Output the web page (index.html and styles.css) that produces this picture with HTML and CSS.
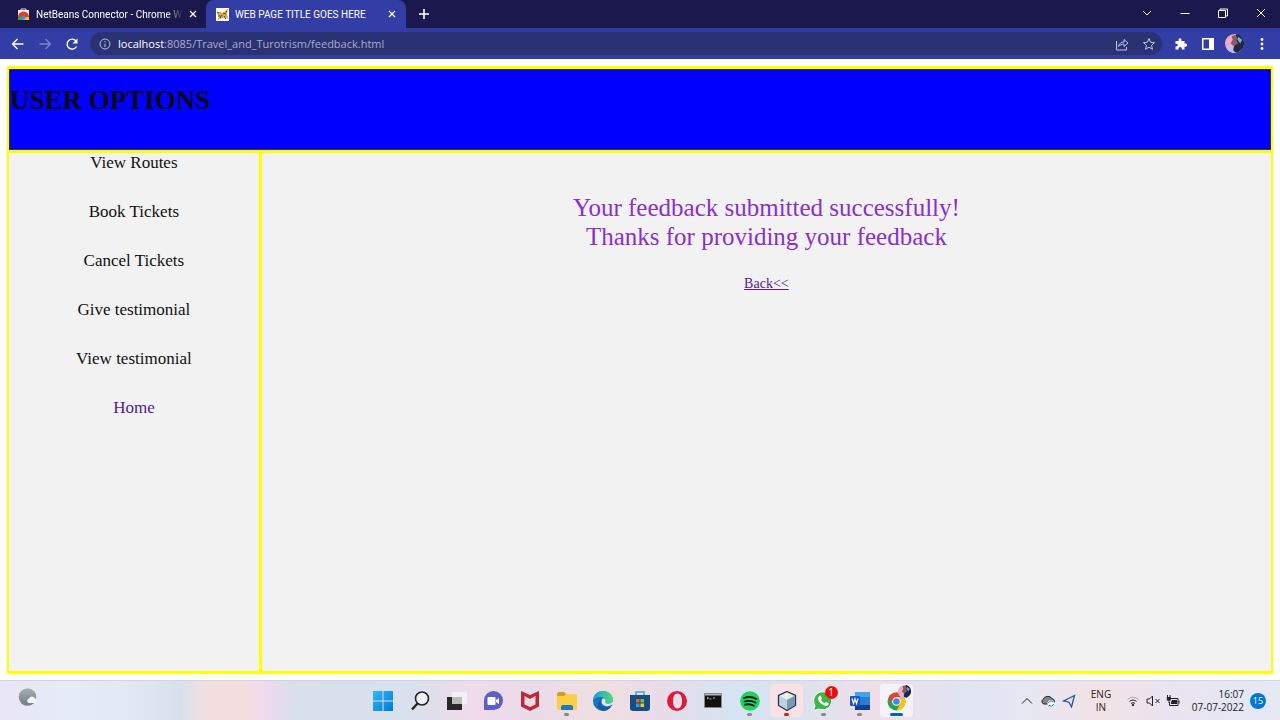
FILE: index.html
```html
<!DOCTYPE html>
<html lang="en">
<head>
<meta charset="utf-8">
<title>WEB PAGE TITLE GOES HERE</title>
<link rel="stylesheet" href="styles.css">
</head>
<body>
<header class="browser">
  <div class="tabs">
    <div class="tab">
      <svg class="favicon" viewBox="0 0 13 13"><path d="M4 3V1h5v2" fill="none" stroke="#ddd"/><path d="M1 2h11v10H1z" fill="#eee"/><path d="M1 9a5.500 5.500 0 0 1 11 0z" fill="#e33b2e"/><path d="M1 9h4l2 3H1z" fill="#36a852"/><path d="M8 9h4v3H6z" fill="#fbc116"/><circle cx="6.500" cy="9.500" r="2" fill="#4285f4"/></svg>
      <span class="tab-title tab-fade">NetBeans Connector - Chrome W</span>
      <button class="close" aria-label="Close tab"><svg viewBox="0 0 8 8"><path d="M1 1l6 6M7 1L1 7"/></svg></button>
    </div>
    <div class="tab active">
      <svg class="favicon" viewBox="0 0 13 13"><path fill="#fff" d="M0 0h13v13H0z"/><path d="M1 5l3-1 3 1 3-3 2-1-1 5 1 5-3-2-2 1-3 1-3 1 2-3z" fill="#d6a848"/><path d="M1 4l2 1M4 10l2-3M7 5l3 1M10 3l1 1M2 8h2M8 8l2 3" stroke="#57451f"/></svg>
      <span class="tab-title">WEB PAGE TITLE GOES HERE</span>
      <button class="close" aria-label="Close tab"><svg viewBox="0 0 8 8"><path d="M1 1l6 6M7 1L1 7"/></svg></button>
    </div>
    <button class="new-tab" aria-label="New tab"><svg viewBox="0 0 12 12"><path d="M6 1v10M1 6h10"/></svg></button>
    <div class="window-controls">
      <button aria-label="Search tabs"><svg viewBox="0 0 12 12"><path d="M2 4l4 4 4-4"/></svg></button>
      <button aria-label="Minimize"><svg viewBox="0 0 12 12"><path d="M1.500 6.500h9"/></svg></button>
      <button aria-label="Restore"><svg viewBox="0 0 12 12"><path d="M1.500 3.500h7v7h-7zM3 3.500v-1.500h7.500V9H9"/></svg></button>
      <button aria-label="Close window"><svg viewBox="0 0 12 12"><path d="M2 2l8 8M10 2l-8 8"/></svg></button>
    </div>
  </div>
  <div class="toolbar">
    <button class="nav" aria-label="Back"><svg viewBox="0 0 14 14"><path d="M12.500 7h-11M6.500 2l-5 5 5 5"/></svg></button>
    <button class="nav dim" aria-label="Forward"><svg viewBox="0 0 14 14"><path d="M1.500 7h11M7.500 2l5 5-5 5"/></svg></button>
    <button class="nav" aria-label="Reload"><svg viewBox="0 0 14 14"><path d="M11.500 9.500A5 5 0 1 1 11 4"/><path d="M12.500 1.500v5h-5z" class="solid"/></svg></button>
    <div class="address">
      <svg class="info" viewBox="0 0 12 12"><circle cx="6" cy="6" r="5"/><path d="M6 5.500V9M6 3v1.200"/></svg>
      <a class="url" href="#"><span class="host">localhost</span>:8085/Travel_and_Turotrism/feedback.html</a>
      <button class="nav soft" aria-label="Share"><svg viewBox="0 0 14 14"><path d="M1.500 4v9h10v-3"/><path d="M3.500 9.500C4 6.500 6 5 9 5V2.500L13 6 9 9.500V7C7 7 5 8 3.500 9.500z"/></svg></button>
      <button class="nav soft" aria-label="Bookmark"><svg viewBox="0 0 14 14"><path d="M7 1.500l1.600 3.800 4 .3-3.100 2.700 1 4L7 10.200l-3.500 2.100 1-4L1.400 5.600l4-.3z"/></svg></button>
    </div>
    <button class="nav" aria-label="Extensions"><svg viewBox="0 0 14 14"><path class="solid" d="M1.500 4h3.200C4.200 2.500 4.800 1.200 6 1.200S7.800 2.500 7.300 4h3.200v2.700c1.500-.5 2.600.1 2.600 1.400s-1.100 1.900-2.600 1.400v3H7.800c.3-1.500-.3-2.400-1.600-2.400s-1.900.9-1.600 2.400H1.500V9.400C3 9.600 3.800 9 3.800 8S3 6.500 1.500 6.800z"/></svg></button>
    <button class="nav" aria-label="Side panel"><svg viewBox="0 0 14 14"><path class="solid" fill-rule="evenodd" d="M1 1h12v12H1zM2.500 2.500v9H8v-9z"/></svg></button>
    <button class="nav profile" aria-label="Profile"><svg viewBox="0 0 20 20"><use href="#avatar"/></svg></button>
    <button class="nav" aria-label="Menu"><svg viewBox="0 0 14 14"><g class="solid"><circle cx="7" cy="2.500" r="1.400"/><circle cx="7" cy="7" r="1.400"/><circle cx="7" cy="11.500" r="1.400"/></g></svg></button>
  </div>
</header>

<main class="page">
  <div class="frame">
    <div class="banner"><h1>USER OPTIONS</h1></div>
    <nav class="side">
      <a href="#">View Routes</a>
      <a href="#">Book Tickets</a>
      <a href="#">Cancel Tickets</a>
      <a href="#">Give testimonial</a>
      <a href="#">View testimonial</a>
      <a href="#" class="visited">Home</a>
    </nav>
    <section class="content">
      <p class="message">Your feedback submitted successfully!<br>Thanks for providing your feedback</p>
      <a class="back" href="#">Back&lt;&lt;</a>
    </section>
  </div>
</main>

<footer class="taskbar">
  <button class="weather" aria-label="Weather"><svg viewBox="0 0 20 20"><circle cx="9.500" cy="9" r="8.800" fill="url(#moon)"/><path d="M11 15a2.300 2.300 0 0 1 0-4.500 3.300 3.300 0 0 1 6 0 2.300 2.300 0 0 1 0 4.500z" fill="#f3f4f6"/></svg></button>
  <div class="apps">
    <button aria-label="Start"><svg viewBox="0 0 20 20"><path fill="url(#win)" d="M0 0h9.500v9.500H0zM10.500 0H20v9.500h-9.500zM0 10.500h9.500V20H0zM10.500 10.500H20V20h-9.500z"/></svg></button>
    <button aria-label="Search"><svg viewBox="0 0 20 20"><circle cx="12" cy="7.500" r="6.500" fill="#eef0f6" stroke="#222" stroke-width="1.600"/><path d="M7.500 12.500l-5.500 6" stroke="#222" stroke-width="2.300"/></svg></button>
    <button aria-label="Task view"><svg viewBox="0 0 20 20"><path fill="#292929" d="M0 6h15v13H0z"/><path fill="#f5f5f5" fill-opacity=".85" d="M5 1h15v12H5z"/><path fill="#bbb" d="M5 6h10v7H5z"/></svg></button>
    <button aria-label="Chat"><svg viewBox="0 0 20 20"><path d="M1 19V9.500A9.500 9.500 0 1 1 10.500 19z" fill="#5b5fc7"/><rect x="4.500" y="6" width="8" height="8" rx="1" fill="#fff"/><path fill="#fff" d="M13 9l3-2v6l-3-2z"/></svg></button>
    <button aria-label="McAfee"><svg viewBox="0 0 20 20"><path d="M1 0l9 4 9-4v15.500L10 20l-9-4.500zM4.500 5v8.500L10 16l5.500-2.500V5L10 8z" fill="#c02732"/></svg></button>
    <button class="open" aria-label="File Explorer"><svg viewBox="0 0 20 20"><rect y="3" width="20" height="16" rx="1.500" fill="#fbce45"/><path d="M0 4q0-3 2-3h5l2 2-2 2H0z" fill="#d99b19"/><path d="M4 19v-3q0-2 2-2h8q2 0 2 2v3z" fill="#1f78c5"/></svg></button>
    <button aria-label="Edge"><svg viewBox="0 0 20 20"><circle cx="10" cy="10" r="10" fill="#1672c5"/><path d="M0 10C0 3 5 0 10 0c6 0 10 4 10 8.500 0 3-2.500 5-5.500 5-2 0-3-1-2.500-2C13 9 11 6 7.500 6 3.500 6 1 8 0 10z" fill="url(#edge)"/><path d="M9 8c-3 3-1 9 6 8.500l3-1c-2 3-5 4.500-8 4.500-6-1-7-8-1-12z" fill="#125ba5"/><path d="M10 7.500c-2.500 1.500-2 7 3.500 7.700 2 .2 4-.5 5.500-1.700l1 0v-3c-1.500 2-3.500 2.700-5.500 2.400-2-.2-2.700-1.200-2-2.400.5-1-.5-3.700-2.500-3z" fill="#e5e8f1"/></svg></button>
    <button aria-label="Microsoft Store"><svg viewBox="0 0 20 20"><path d="M6 5V1h8v4" fill="none" stroke="#42a7df" stroke-width="1.500"/><path d="M0 4h20v13q0 3-3 3H3q-3 0-3-3z" fill="#174d80"/><path fill="#f15a29" d="M6 8h3.500v3.500H6z"/><path fill="#80b93b" d="M10.500 8H14v3.500h-3.500z"/><path fill="#26a7e5" d="M6 12.500h3.500V16H6z"/><path fill="#fcc62e" d="M10.500 12.500H14V16h-3.500z"/></svg></button>
    <button aria-label="Opera"><svg viewBox="0 0 20 20"><path fill="#df1b35" fill-rule="evenodd" d="M10 0a10 10 0 1 0 0 20 10 10 0 1 0 0-20zM10.500 2.500c3 0 4.500 3 4.500 7.500s-1.500 7.500-4.500 7.500S6 14.500 6 10s1.500-7.500 4.500-7.500z"/></svg></button>
    <button aria-label="Command Prompt"><svg viewBox="0 0 20 20"><path fill="#111" stroke="#888" d="M1.500 2.500h17v14h-17z"/><path fill="#b5b5b5" d="M2 3h16v1.500H2z"/><path d="M4 6l1.500 1L4 8M6.500 8h2M10 7h2" stroke="#ddd" fill="none" stroke-width=".8"/></svg></button>
    <button class="open" aria-label="Spotify"><svg viewBox="0 0 20 20"><circle cx="10" cy="10" r="9.800" fill="#1ed35e"/><path d="M4 7c4-1.500 9-1 12.500 1M4.500 10.500c4-1 7.500-.7 11 1M5 13.700c3-.8 6-.5 9 1" fill="none" stroke="#111" stroke-width="1.800" stroke-linecap="round"/></svg></button>
    <button class="open alert" aria-label="NetBeans"><svg viewBox="0 0 20 20"><path d="M10 .5l8.500 4v10L10 19.500l-8.500-5v-10z" fill="#9db8ca" stroke="#283353" stroke-width="1.300"/><path d="M10 1.500l7.500 3.500L10 9 2.500 5z" fill="#e7f0e8"/><path d="M10 9l7.500-4v9L10 18.500z" fill="#7899b3"/><path d="M2.500 5L10 9v9.500L2.500 14z" fill="#bfd2df"/></svg></button>
    <button class="open" aria-label="WhatsApp, 1 notification"><svg viewBox="0 0 20 20"><path d="M.5 19.500L2 14.500A9 9 0 1 1 6 18z" fill="#3bb54a" stroke="#fff"/><path d="M6 5l1.500-.5 1.500 3-1 1.300c1 1.800 2 2.700 3.500 3.400l1.500-1.300 2.700 1.400c0 2-1.500 2.700-3 2.500-4-.6-7.500-4-7.700-7.500z" fill="#fff"/></svg><span class="badge">1</span></button>
    <button class="open" aria-label="Word"><svg viewBox="0 0 20 20"><rect x="5" y="1" width="15" height="18" rx="1" fill="#2b7cd3"/><path fill="#41a5ee" d="M5 1h15v5H5z"/><path fill="#103f91" d="M5 14h15v5H5z"/><rect y="5" width="10" height="10" rx="1" fill="#185abd"/><path d="M2 7.500l1.500 5L5 8l1.500 4.500 1.500-5" fill="none" stroke="#fff" stroke-width="1.200"/></svg></button>
    <button class="open current" aria-label="Chrome"><svg viewBox="0 0 20 20"><circle cx="9.500" cy="10.500" r="9" fill="#2ca14d"/><path d="M1.700 6A9 9 0 0 1 17.300 6h-7.800l-4 7z" fill="#e54236"/><path d="M17.300 6A9 9 0 0 1 9.500 19.500l4-7L9.500 6z" fill="#fbc217"/><circle cx="9.500" cy="10.500" r="4.300" fill="#fff"/><circle cx="9.500" cy="10.500" r="3.300" fill="#4285f4"/></svg><svg class="mini-profile" viewBox="0 0 20 20"><g id="avatar"><circle cx="10" cy="10" r="10" fill="#f0a9c4"/><path d="M12 0a10 10 0 0 1 5 17l-4 2.800-5-2 2-6-1-5z" fill="#1e2945"/><path d="M7 2l4-1 2 3-1 3 2 3-5 3-3-3 2-4z" fill="#8d5a64"/><path d="M1 14l6-2 3 8q-6 0-9-6z" fill="#b9bfff"/><path d="M14 3l4 3-2 4-3-4z" fill="#74afd0"/></g></svg></button>
  </div>
  <div class="tray">
    <button class="wide" aria-label="Show hidden icons"><svg viewBox="0 0 14 14"><path d="M2 9.500l5-5 5 5"/></svg></button>
    <button class="wide" aria-label="OneDrive"><svg viewBox="0 0 14 14"><path d="M3 10a2.500 2.500 0 0 1-1-4.500 5 4.500 0 0 1 9-1A3 3 0 0 1 12 10z" fill="#858585"/><circle cx="10" cy="9.500" r="3.500" fill="#fff" stroke="none"/><path d="M7.500 9a2.500 2.500 0 0 1 4.500-1V6.500M12.500 10A2.500 2.500 0 0 1 8 11v1.500" stroke="#1684d8"/></svg></button>
    <button class="wide" aria-label="Location"><svg viewBox="0 0 14 14"><path d="M12.500 1.500L1.500 7l5.500 1.200L9.500 13z" stroke="#24579b" stroke-width="1.300"/></svg></button>
    <button class="lang">ENG<br>IN</button>
    <button aria-label="Wi-Fi"><svg viewBox="0 0 14 14"><path d="M1.500 5.500a8 8 0 0 1 11 0" stroke="#aaa"/><path d="M3.500 7.500a5 5 0 0 1 7 0M5 9.500a3 3 0 0 1 4 0"/><circle cx="7" cy="11" r=".8" fill="#222"/></svg></button>
    <button aria-label="Muted"><svg viewBox="0 0 14 14"><path d="M1 5h2.500l3-3v10l-3-3H1zM9.500 5l4 4M13.500 5l-4 4"/></svg></button>
    <button aria-label="Battery charging"><svg viewBox="0 0 14 14"><path d="M4 4.500h8v7H3.500V8"/><path d="M6 6h5v4H5V8zM12.500 6.500h1v3h-1zM.8 3h4v3.500h-4z" fill="#222" stroke="none"/><path d="M1.500 1v2M4 1v2M3 6v3"/></svg></button>
    <button class="clock">16:07<br>07-07-2022</button>
    <button class="count" aria-label="15 notifications">15</button>
  </div>
  <svg class="defs" aria-hidden="true"><defs>
    <linearGradient id="moon" x2="0" y2="1"><stop stop-color="#a7adb4"/><stop offset="1" stop-color="#737d87"/></linearGradient>
    <linearGradient id="win" x2="1" y2="1"><stop stop-color="#35b9f5"/><stop offset="1" stop-color="#0078d7"/></linearGradient>
    <linearGradient id="edge"><stop stop-color="#199fda"/><stop offset="1" stop-color="#55d877"/></linearGradient>
  </defs></svg>
</footer>
</body>
</html>
```
FILE: styles.css
```css
* { box-sizing: border-box; }
body {
  margin: 0;
  min-height: 100vh;
  display: flex;
  flex-direction: column;
  background: #fff;
  font-family: "Liberation Serif", serif;
}
button {
  border: 0;
  padding: 0;
  background: none;
  color: inherit;
  font: inherit;
  display: flex;
  align-items: center;
  justify-content: center;
}
svg { display: block; flex: none; }

.browser {
  font-family: "Open Sans", sans-serif;
  font-size: 11px;
  color: #fff;
  background: #1a184d;
}
.browser svg { fill: none; stroke: currentColor; }
.browser .favicon, .browser .profile svg { stroke: none; }
.browser .solid { fill: currentColor; stroke: none; }
.tabs { display: flex; height: 28px; align-items: stretch; }
.tab {
  width: 206px;
  display: flex;
  align-items: center;
  gap: 6px;
  padding: 0 9px 0 17px;
  font-family: Roboto, sans-serif;
  font-size: 10px;
}
.tab.active {
  width: 200px;
  padding: 0 10px;
  background: #323da5;
  border-radius: 8px 8px 0 0;
}
.favicon { width: 13px; height: 13px; }
.tab-title { flex: 1; white-space: nowrap; }
.tab-fade { mask-image: linear-gradient(90deg, #000 88%, transparent); }
.close svg { width: 8px; height: 8px; stroke-width: 1.3; }
.new-tab { width: 36px; }
.new-tab svg { width: 12px; height: 12px; stroke-width: 1.6; }
.window-controls { display: flex; margin-left: auto; }
.window-controls button { width: 38px; padding-bottom: 3px; }
.window-controls svg { width: 12px; height: 12px; }
.toolbar {
  height: 31px;
  display: flex;
  align-items: center;
  padding: 0 5px 0 4px;
  background: #323da5;
}
.nav { width: 27px; height: 24px; flex: none; }
.nav svg { width: 14px; height: 14px; stroke-width: 1.4; }
.nav.dim { color: #7d84cb; }
.nav.soft { color: #c0c4e4; }
.nav.soft svg { stroke-width: 1; }
.nav.profile svg { width: 19px; height: 19px; }
.address {
  flex: 1;
  height: 23px;
  margin: 0 5px;
  padding-left: 9px;
  display: flex;
  align-items: center;
  border-radius: 12px;
  background: #2b3274;
}
.info { width: 12px; height: 12px; color: #b9bddb; }
.url { flex: 1; margin-left: 7px; color: #a7abd0; text-decoration: none; }
.host { color: #fff; }

.page { flex: 1; display: flex; padding: 7px 7px 6px; }
.frame {
  flex: 1;
  display: grid;
  grid-template-columns: 100fr 404fr;
  grid-template-rows: 81px 1fr;
  gap: 3px;
  padding: 3px 2px;
  background: #ff0;
}
.banner { grid-column: 1 / -1; background: #00f; border: 1px solid #30304f; }
.banner h1 { margin: 15px 0 0; font-size: 27px; line-height: 31px; color: #080818; }
.side {
  display: flex;
  flex-direction: column;
  align-items: center;
  gap: 29px;
  background: #f2f2f2;
}
.side a { font-size: 17px; line-height: 20px; color: #111; text-decoration: none; }
.side a.visited { color: #551a8b; }
.content {
  display: flex;
  flex-direction: column;
  align-items: center;
  padding-top: 40px;
  background: #f2f2f2;
}
.message {
  margin: 0 0 25px;
  font-size: 25px;
  line-height: 29px;
  text-align: center;
  color: #8a2fd0;
}
.back { font-size: 14px; line-height: 16px; color: #551a8b; }

.taskbar {
  height: 40px;
  display: grid;
  grid-template-columns: 1fr 550px 1fr;
  align-items: center;
  border-top: 1px solid #d0d5df;
  font-family: "Open Sans", sans-serif;
  color: #222;
  background: linear-gradient(90deg, #e9e5f4 0, #e5ebf7 5%, #e2e9f5 10%, #d8e0ec 14%, #f2dfdf 16%, #f4dfdf 19%, #eedaf0 21%, #d8dfeb 23%, #d9e1ee 32%, #f0dbe9 37%, #eadbe9 42%, #f0dfdf 47%, #ecdbe8 51%, #d6e4f3 57%, #dbe2ef 62%, #eedfe9 68%, #e1e4f1 75%, #e5e7f3 80%, #f2e2e5 86%, #e9e4ef 91%, #e3e9f5 100%);
}
.weather { width: 20px; height: 20px; margin: 0 0 6px 18px; }
.weather svg { width: 20px; height: 20px; }
.apps { display: grid; grid-template-columns: repeat(15, 1fr); height: 39px; }
.apps button { position: relative; }
.apps svg { width: 20px; height: 20px; }
.open::after {
  content: "";
  position: absolute;
  bottom: 4px;
  width: 5px;
  height: 3px;
  border-radius: 2px;
  background: #858790;
}
.apps .alert, .apps .current { margin: 3px 2px; border-radius: 4px; background: #f9e1e4; }
.apps .current { background: #f6f3f8; }
.apps .alert::after { bottom: 1px; background: #c42b1c; }
.apps .current::after { bottom: 1px; width: 13px; background: #0067c0; }
.badge {
  position: absolute;
  top: 5px;
  right: 4px;
  width: 13px;
  height: 13px;
  border-radius: 50%;
  background: #e81010;
  color: #fff;
  font-size: 10px;
  line-height: 13px;
}
.apps .mini-profile { position: absolute; top: 1px; right: 2px; width: 13px; height: 13px; }
.tray {
  display: flex;
  justify-content: flex-end;
  align-items: center;
  padding-right: 14px;
  font-size: 10px;
  line-height: 13px;
}
.tray button { flex: none; width: 20px; }
.tray svg { width: 14px; height: 14px; fill: none; stroke: #222; }
.tray .wide { width: 21px; }
.tray .lang { width: 44px; }
.tray .clock { width: 61px; justify-content: flex-end; text-align: right; }
.tray .count {
  width: 16px;
  height: 16px;
  margin-left: 6px;
  border-radius: 50%;
  background: #0078d4;
  color: #fff;
  font-size: 9px;
}
.defs { position: absolute; width: 0; height: 0; }
```
